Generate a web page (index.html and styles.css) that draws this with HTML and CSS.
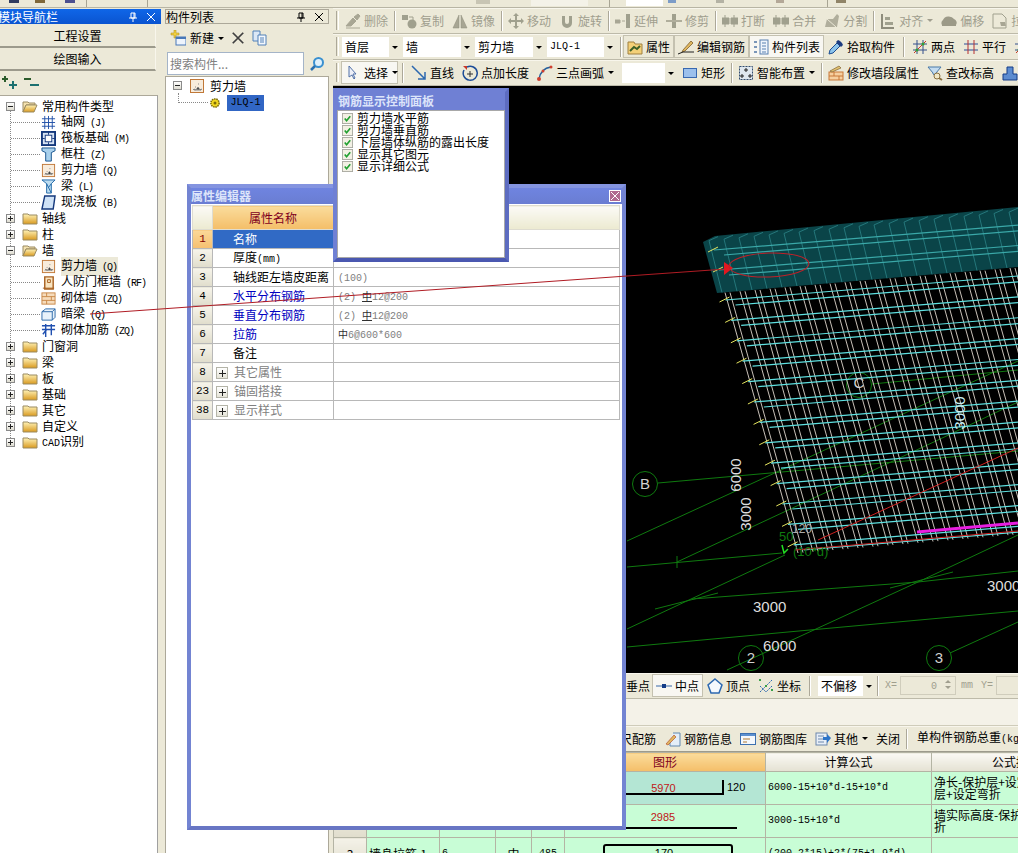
FILE: index.html
```html
<!DOCTYPE html>
<html lang="zh-CN">
    <head>
        <meta charset="UTF-8" />
        <title>钢筋算量 - 绘图输入</title>
        <link rel="stylesheet" href="styles.css">
    </head>
    <body>
        <!-- shared icon sheet -->
        <svg class="defs" width="0" height="0">
            <defs>
                <linearGradient id="fold" x1="0" y1="0" x2="0" y2="1"><stop offset="0" stop-color="#fff3b8"/><stop offset="1" stop-color="#d99a20"/></linearGradient>
                <symbol id="i-folder" viewBox="0 0 16 16"><path d="M1 4h5l1 1h8v9H1z" fill="url(#fold)" stroke="#9a8a60"/></symbol>
                <symbol id="i-open" viewBox="0 0 16 16"><path d="M1 4h5l1 1h6v2H4L1 14z" fill="#f4e2b0" stroke="#9a8a60"/><path d="M4 7h11l-3 7H1z" fill="url(#fold)" stroke="#9a8a60"/></symbol>
                <symbol id="i-axis" viewBox="0 0 16 16"><path d="M1 4h14M1 8h14M1 12h14M4 1v14M8 1v14M12 1v14" stroke="#2050a8" fill="none"/></symbol>
                <symbol id="i-raft" viewBox="0 0 16 16"><rect x="1" y="1" width="14" height="14" fill="#d8e4f4" stroke="#14387c" stroke-width="2"/><rect x="4.500" y="4.500" width="7" height="7" fill="#fff" stroke="#14387c"/><path d="M1 8h3M12 8h3M8 1v3M8 12v3" stroke="#14387c"/></symbol>
                <symbol id="i-col" viewBox="0 0 16 16"><path d="M1 1h14v3l-4 2v9H5V6L1 4z" fill="#a8d0ec" stroke="#14508c"/></symbol>
                <symbol id="i-wall" viewBox="0 0 16 16"><rect x="1.500" y="1.500" width="13" height="13" fill="#f8ecdc" stroke="#c07838"/><path d="M4 12l1-1 2 1 2-3 2 3 2-1M6 9h1M9 6h1M5 12h7" stroke="#8a8a8a"/></symbol>
                <symbol id="i-beam" viewBox="0 0 16 16"><path d="M1 1h14L11 5v10H6V5z" fill="#bcdcf0" stroke="#2068a8"/><path d="M6 5l5 10M11 5l-3 4" stroke="#2068a8"/></symbol>
                <symbol id="i-slab" viewBox="0 0 16 16"><path d="M4 1h11l-2 14H1z" fill="#cfe2f6" stroke="#14387c" stroke-width="1.500"/></symbol>
                <symbol id="i-door" viewBox="0 0 16 16"><path d="M4 2h9v13H4z" fill="#f8e4c0" stroke="#a86020" stroke-width="1.500"/><path d="M7 5h3v3H7zM2 14h12" stroke="#a86020" fill="none"/></symbol>
                <symbol id="i-brick" viewBox="0 0 16 16"><rect x="1" y="2" width="14" height="12" fill="#f6dcbc" stroke="#c88848"/><path d="M1 6h14M1 10h14M6 2v4M11 6v4M6 10v4" stroke="#c88848"/></symbol>
                <symbol id="i-dark" viewBox="0 0 16 16"><path d="M1 5l4-3h10v9l-3 3H1z" fill="#e8f2fa" stroke="#2a68a8"/><path d="M1 5h11v9M12 5l3-3" stroke="#2a68a8" fill="none"/></symbol>
                <symbol id="i-addbar" viewBox="0 0 16 16"><path d="M1 3h14M1 7h14M5 1v14M11 1v12M2 12l4-5" stroke="#2050b0" fill="none" stroke-width="1.500"/></symbol>
                <symbol id="i-gear" viewBox="0 0 16 16"><circle cx="8" cy="8" r="5.500" fill="#f2d820" stroke="#7a6a08" stroke-dasharray="2 1" stroke-width="2"/><circle cx="8" cy="8" r="2" fill="#7a6a08"/></symbol>
                <symbol id="i-new" viewBox="0 0 16 16"><path d="M1 3h3V0h2v3h3v2H6v3H4V5H1z" fill="#f0d040" stroke="#a88818" stroke-width=".5"/><rect x="6" y="7" width="10" height="8" fill="#eef4fc" stroke="#4878b8"/><rect x="6" y="7" width="10" height="2" fill="#4878b8"/></symbol>
                <symbol id="i-x" viewBox="0 0 16 16"><path d="M2 2l12 12M14 2L2 14" stroke="#404040" stroke-width="2"/></symbol>
                <symbol id="i-dup" viewBox="0 0 16 16"><path d="M1 1h7v10H1z" fill="#dce8f6" stroke="#5080b8"/><path d="M6 5h8v10H6z" fill="#f4f8fd" stroke="#5080b8"/><path d="M8 8h4M8 10h4M8 12h4" stroke="#5080b8"/></symbol>
                <symbol id="i-find" viewBox="0 0 16 16"><circle cx="9.500" cy="6.500" r="4.500" fill="#dff0fb" stroke="#3a90d0" stroke-width="2"/><path d="M6 10l-4 4" stroke="#2a70b0" stroke-width="2.500"/></symbol>
                <symbol id="i-check" viewBox="0 0 12 12"><rect x=".5" y=".5" width="11" height="11" fill="#f2f0e4" stroke="#a8a8a0"/><path d="M3 6l2 2.500L9 3.500" fill="none" stroke="#20a030" stroke-width="1.800"/></symbol>
                <symbol id="i-pin" viewBox="0 0 10 10"><path d="M3 1h4v5H3zM1 6h8M5 6v4M6 1v5" stroke="currentColor" fill="none"/></symbol>
                <symbol id="i-close" viewBox="0 0 10 10"><path d="M1 1l8 8M9 1L1 9" stroke="currentColor"/></symbol>
                <symbol id="i-plus2" viewBox="0 0 16 16"><path d="M3 1v6M0 4h6" stroke="#2c5c2c" stroke-width="2"/><path d="M11 6v8M7 10h8" stroke="#1c7070" stroke-width="2"/></symbol>
                <symbol id="i-minus2" viewBox="0 0 16 16"><path d="M0 4h7" stroke="#2c5c2c" stroke-width="2"/><path d="M6 10h9" stroke="#1c7070" stroke-width="2"/></symbol>

                <symbol id="g-erase" viewBox="0 0 16 16"><path d="M1 13l7-8 3 3-5 5zM9 4l4-3 2 2-3 4zM1 15h14" fill="#a8a694" stroke="#a8a694"/></symbol>
                <symbol id="g-copy" viewBox="0 0 16 16"><rect x="1" y="2" width="6" height="5" fill="#a0a08e"/><circle cx="11" cy="11" r="4.500" fill="#a0a08e"/><path d="M8 4h4v3" stroke="#a0a08e" fill="none"/></symbol>
                <symbol id="g-mirror" viewBox="0 0 16 16"><path d="M7 2v13H1zM9 2v13h6z" fill="#a8a694" stroke="#8e8c7c" stroke-width=".5"/></symbol>
                <symbol id="g-move" viewBox="0 0 16 16"><path d="M8 0l3 3H9v4h4V5l3 3-3 3V9H9v4h2l-3 3-3-3h2V9H3v2L0 8l3-3v2h4V3H5z" fill="#a0a08e"/></symbol>
                <symbol id="g-rot" viewBox="0 0 16 16"><path d="M3 3v7a5 5 0 0 0 10 0V3h-3v6a2 2 0 0 1-4 0V3z" fill="#a0a08e"/></symbol>
                <symbol id="g-ext" viewBox="0 0 16 16"><path d="M0 7h5v3H0zM7 8h3" stroke="#a8a694" fill="#a8a694"/><rect x="11" y="1" width="4" height="14" fill="#a0a08e"/></symbol>
                <symbol id="g-trim" viewBox="0 0 16 16"><rect x="6" y="1" width="4" height="14" fill="#a0a08e"/><path d="M0 7h16v2H0z" fill="#b0ae9c"/></symbol>
                <symbol id="g-break" viewBox="0 0 16 16"><path d="M0 5h7v6H0zM9 5h7v6H9zM3 2v3M12 2v3M3 11v3M12 11v3" fill="#a0a08e" stroke="#a0a08e"/></symbol>
                <symbol id="g-split" viewBox="0 0 16 16"><path d="M1 14l2-8h6l4-5 2 2-2 11z" fill="#b0ae9c"/><path d="M3 6l9 8" stroke="#ece9d8"/></symbol>
                <symbol id="g-align" viewBox="0 0 16 16"><path d="M2 1v14h12" fill="none" stroke="#8e8c7c" stroke-width="2"/><path d="M5 4h5v3H5zM5 9h8v3H5z" fill="#a0a08e"/></symbol>
                <symbol id="g-off" viewBox="0 0 16 16"><path d="M1 12a4 4 0 0 1 1-5 6 5 0 0 1 11-1 4 4 0 0 1 2 6v1H1z" fill="#9c9a88"/></symbol>
                <symbol id="g-str" viewBox="0 0 16 16"><path d="M1 1h9l4 4v10H1z" fill="none" stroke="#a0a08e"/><path d="M8 9h5l1 4H9z" fill="#a8a694"/></symbol>

                <symbol id="c-prop" viewBox="0 0 16 16"><path d="M1 3h6l1 2h7v10H1z" fill="#f4d078" stroke="#a08040"/><path d="M3 12l4-4 3 2 3-3" stroke="#3c6028" stroke-width="2" fill="none"/></symbol>
                <symbol id="c-edit" viewBox="0 0 16 16"><path d="M5 11L13 2l2 2-8 8-3 1z" fill="#e0b860" stroke="#705020" stroke-width=".7"/><path d="M0 15l5-2 11 0" stroke="#202020" fill="none"/></symbol>
                <symbol id="c-list" viewBox="0 0 16 16"><path d="M1 2h3v2H1zM1 7h3v2H1zM1 12h3v2H1z" fill="#7a96b8"/><rect x="7" y="1" width="8" height="14" fill="#eef4fc" stroke="#5880b0"/><path d="M9 4h4M9 7h4M9 10h4M9 13h4" stroke="#5880b0"/></symbol>
                <symbol id="c-pick" viewBox="0 0 16 16"><path d="M1 15l1-4 7-7 3 3-7 7z" fill="#8cc4ec" stroke="#1c4c90"/><path d="M8 3l2-2 2 1 2 2 1 2-2 2z" fill="#1c3c80"/></symbol>
                <symbol id="c-two" viewBox="0 0 16 16"><path d="M1 5h14M1 11h14M5 1v14M11 1v14" stroke="#34508c"/><path d="M2 14L14 2" stroke="#c83828"/><circle cx="5" cy="11" r="1.500" fill="#30a030"/><circle cx="11" cy="5" r="1.500" fill="#30a030"/></symbol>
                <symbol id="c-par" viewBox="0 0 16 16"><path d="M1 5h14M1 11h14" stroke="#2c4c98"/><path d="M5 1v14M11 1v14" stroke="#b83030"/></symbol>
                <symbol id="c-arrow" viewBox="0 0 16 16"><path d="M4 1v11l3-2 2 4 1-1-2-4h3z" fill="#eef0f8" stroke="#5070a8"/></symbol>
                <symbol id="c-line" viewBox="0 0 16 16"><path d="M1 1l13 13M14 7v7H7" stroke="#2c68b0" stroke-width="1.500" fill="none"/></symbol>
                <symbol id="c-plen" viewBox="0 0 16 16"><path d="M5 2a7 7 0 1 1-3 3" stroke="#1c4c98" stroke-width="1.500" fill="none"/><path d="M8 6v6M5 9h6" stroke="#303030"/><path d="M1 1h4v4z" fill="#c83828"/></symbol>
                <symbol id="c-arc" viewBox="0 0 16 16"><path d="M2 14C3 8 7 3 14 2" stroke="#24609c" stroke-width="1.500" fill="none"/><circle cx="2" cy="14" r="2" fill="#d04030"/><circle cx="6" cy="6" r="1.500" fill="#d04030"/><circle cx="14" cy="2" r="1.500" fill="#d04030"/></symbol>
                <symbol id="c-rect" viewBox="0 0 16 16"><rect x="1.500" y="3.500" width="13" height="9" fill="#9cc0ec" stroke="#3868b0"/></symbol>
                <symbol id="c-smart" viewBox="0 0 16 16"><rect x="1.500" y="1.500" width="13" height="13" fill="#dfe8f0" stroke="#304c70" stroke-dasharray="2 1"/><path d="M8 3v4M6 5h4M4 9v4M2 11h4M12 9v4M10 11h4" stroke="#202020"/></symbol>
                <symbol id="c-editw" viewBox="0 0 16 16"><rect x="1" y="7" width="14" height="8" fill="#f6d0a0" stroke="#c87838"/><path d="M1 11h14M6 7v4M11 11v4" stroke="#c87838"/><path d="M2 6l9-5 2 2-9 4z" fill="#e0c070" stroke="#705020" stroke-width=".6"/></symbol>
                <symbol id="c-elev" viewBox="0 0 16 16"><path d="M1 2h13L9 8v3L6 9V8z" fill="#c4dcf0" stroke="#4878a8"/><circle cx="10" cy="11" r="3" fill="#f0e8c8" stroke="#8a7040"/><path d="M12 13l3 2" stroke="#8a7040" stroke-width="2"/></symbol>
                <symbol id="c-next" viewBox="0 0 16 16"><path d="M1 15V9h4V2h6v7h4v6z" fill="#5c8cd0" stroke="#143c88"/></symbol>
                <symbol id="c-mid" viewBox="0 0 16 16"><path d="M0 8h16" stroke="#3868a8"/><rect x="6" y="6" width="4" height="4" fill="#143c88"/></symbol>
                <symbol id="c-vertex" viewBox="0 0 16 16"><path d="M8 1l7 6-3 8H4L1 7z" fill="#f4f8fc" stroke="#2c68b0" stroke-width="1.500"/></symbol>
                <symbol id="c-coord" viewBox="0 0 16 16"><path d="M2 14L14 2M2 8l6 6 6-6" stroke="#2c68b0" stroke-dasharray="2 1" fill="none"/><path d="M1 1h2v2H1zM13 11h2v2h-2zM7 7h2v2H7z" fill="#38a048"/></symbol>
                <symbol id="c-info" viewBox="0 0 16 16"><path d="M8 2h7v13H5V9" fill="#e4eef8" stroke="#6088b0"/><path d="M1 13l8-9 2 2-8 8z" fill="#e0b860" stroke="#b04020" stroke-width=".6"/></symbol>
                <symbol id="c-lib" viewBox="0 0 16 16"><rect x=".5" y="2.500" width="15" height="11" fill="#f4f8fc" stroke="#3c70b0"/><rect x="1" y="3" width="14" height="2" fill="#5c90d0"/><path d="M3 8h7M3 11h4" stroke="#b07830"/></symbol>
                <symbol id="c-other" viewBox="0 0 16 16"><rect x="1" y="2" width="11" height="12" fill="#e8eff8" stroke="#6c88ac"/><path d="M3 5h6M3 8h6M3 11h6" stroke="#6c88ac"/><path d="M8 6h4V3l4 4-4 5V9H8z" fill="#2c74c8"/></symbol>
            </defs>
        </svg>

        <div class="top-strip">
            <i class="stub s-a"></i><i class="stub s-b"></i><i class="stub s-c"></i>
            <span class="vbar v-a"></span>
            <span class="vbar v-b"></span>
            <i class="stub s-d"></i>
            <span class="stub-combo c-a"></span>
            <span class="vbar v-c"></span>
            <span class="stub-combo c-b"></span>
            <i class="stub s-e"></i><i class="stub s-f"></i><i class="stub s-g"></i>
            <span class="vbar v-d"></span>
            <i class="stub s-h"></i>
        </div>

        <div class="app">
            <!-- module navigator -->
            <aside class="nav">
                <div class="pane-head active">
                    <span class="nav-title">模块导航栏</span>
                    <svg class="pane-ic"><use href="#i-pin"/></svg>
                    <svg class="pane-ic"><use href="#i-close"/></svg>
                </div>
                <div class="nav-btn">工程设置</div>
                <div class="nav-btn">绘图输入</div>
                <div class="nav-tools">
                    <svg class="ic"><use href="#i-plus2"/></svg>
                    <svg class="ic"><use href="#i-minus2"/></svg>
                </div>
                <ul class="tree">
                    <li>
                        <div class="node"><b class="box minus"></b><svg class="ic"><use href="#i-open"/></svg><span>常用构件类型</span></div>
                        <ul class="kids">
                            <li class="kid"><svg class="ic"><use href="#i-axis"/></svg><span>轴网<em> (J)</em></span></li>
                            <li class="kid"><svg class="ic"><use href="#i-raft"/></svg><span>筏板基础<em> (M)</em></span></li>
                            <li class="kid"><svg class="ic"><use href="#i-col"/></svg><span>框柱<em> (Z)</em></span></li>
                            <li class="kid"><svg class="ic"><use href="#i-wall"/></svg><span>剪力墙<em> (Q)</em></span></li>
                            <li class="kid"><svg class="ic"><use href="#i-beam"/></svg><span>梁<em> (L)</em></span></li>
                            <li class="kid"><svg class="ic"><use href="#i-slab"/></svg><span>现浇板<em> (B)</em></span></li>
                        </ul>
                    </li>
                    <li><div class="node"><b class="box"></b><svg class="ic"><use href="#i-folder"/></svg><span>轴线</span></div></li>
                    <li><div class="node"><b class="box"></b><svg class="ic"><use href="#i-folder"/></svg><span>柱</span></div></li>
                    <li>
                        <div class="node"><b class="box minus"></b><svg class="ic"><use href="#i-open"/></svg><span>墙</span></div>
                        <ul class="kids">
                            <li class="kid"><svg class="ic"><use href="#i-wall"/></svg><span class="current">剪力墙<em> (Q)</em></span></li>
                            <li class="kid"><svg class="ic"><use href="#i-door"/></svg><span>人防门框墙<em> (RF)</em></span></li>
                            <li class="kid"><svg class="ic"><use href="#i-brick"/></svg><span>砌体墙<em> (ZQ)</em></span></li>
                            <li class="kid"><svg class="ic"><use href="#i-dark"/></svg><span>暗梁<em> (Q)</em></span></li>
                            <li class="kid"><svg class="ic"><use href="#i-addbar"/></svg><span>砌体加筋<em> (ZQ)</em></span></li>
                        </ul>
                    </li>
                    <li><div class="node"><b class="box"></b><svg class="ic"><use href="#i-folder"/></svg><span>门窗洞</span></div></li>
                    <li><div class="node"><b class="box"></b><svg class="ic"><use href="#i-folder"/></svg><span>梁</span></div></li>
                    <li><div class="node"><b class="box"></b><svg class="ic"><use href="#i-folder"/></svg><span>板</span></div></li>
                    <li><div class="node"><b class="box"></b><svg class="ic"><use href="#i-folder"/></svg><span>基础</span></div></li>
                    <li><div class="node"><b class="box"></b><svg class="ic"><use href="#i-folder"/></svg><span>其它</span></div></li>
                    <li><div class="node"><b class="box"></b><svg class="ic"><use href="#i-folder"/></svg><span>自定义</span></div></li>
                    <li><div class="node"><b class="box"></b><svg class="ic"><use href="#i-folder"/></svg><span><em>CAD</em>识别</span></div></li>
                </ul>
            </aside>

            <!-- component list -->
            <aside class="list">
                <div class="pane-head">
                    <span class="list-title">构件列表</span>
                    <svg class="pane-ic"><use href="#i-pin"/></svg>
                    <svg class="pane-ic"><use href="#i-close"/></svg>
                </div>
                <div class="list-tools">
                    <svg class="ic"><use href="#i-new"/></svg>
                    <span>新建</span><i class="caret"></i>
                    <svg class="ic list-x"><use href="#i-x"/></svg>
                    <svg class="ic"><use href="#i-dup"/></svg>
                </div>
                <div class="list-search">
                    <span class="search-box">搜索构件...</span>
                    <svg class="ic"><use href="#i-find"/></svg>
                </div>
                <div class="list-tree">
                    <div class="list-root"><b class="box minus"></b><svg class="ic"><use href="#i-wall"/></svg><span>剪力墙</span></div>
                    <div class="list-item"><svg class="ic small"><use href="#i-gear"/></svg><span class="picked">JLQ-1</span></div>
                </div>
            </aside>

            <main class="work">
                <div class="tb">
                    <span class="grip"></span>
                    <span class="tool off"><svg class="ic"><use href="#g-erase"/></svg>删除</span><span class="sep"></span>
                    <span class="tool off"><svg class="ic"><use href="#g-copy"/></svg>复制</span>
                    <span class="tool off"><svg class="ic"><use href="#g-mirror"/></svg>镜像</span><span class="sep"></span>
                    <span class="tool off"><svg class="ic"><use href="#g-move"/></svg>移动</span>
                    <span class="tool off"><svg class="ic"><use href="#g-rot"/></svg>旋转</span><span class="sep"></span>
                    <span class="tool off"><svg class="ic"><use href="#g-ext"/></svg>延伸</span>
                    <span class="tool off"><svg class="ic"><use href="#g-trim"/></svg>修剪</span><span class="sep"></span>
                    <span class="tool off"><svg class="ic"><use href="#g-break"/></svg>打断</span>
                    <span class="tool off"><svg class="ic"><use href="#g-break"/></svg>合并</span>
                    <span class="tool off"><svg class="ic"><use href="#g-split"/></svg>分割</span><span class="sep"></span>
                    <span class="tool off"><svg class="ic"><use href="#g-align"/></svg>对齐<i class="caret"></i></span>
                    <span class="tool off"><svg class="ic"><use href="#g-off"/></svg>偏移</span>
                    <span class="tool off"><svg class="ic"><use href="#g-str"/></svg>拉伸</span>
                </div>
                <div class="tb">
                    <span class="grip"></span>
                    <span class="combo w-floor">首层<i class="drop"></i></span>
                    <span class="combo w-type">墙<i class="drop"></i></span>
                    <span class="combo w-type">剪力墙<i class="drop"></i></span>
                    <span class="combo w-name">JLQ-1<i class="drop"></i></span>
                    <span class="sep"></span>
                    <span class="tool down"><svg class="ic"><use href="#c-prop"/></svg>属性</span>
                    <span class="tool down"><svg class="ic"><use href="#c-edit"/></svg>编辑钢筋</span>
                    <span class="tool down light"><svg class="ic"><use href="#c-list"/></svg>构件列表</span>
                    <span class="tool"><svg class="ic"><use href="#c-pick"/></svg>拾取构件</span>
                    <span class="sep wide"></span>
                    <span class="tool"><svg class="ic"><use href="#c-two"/></svg>两点</span>
                    <span class="tool"><svg class="ic"><use href="#c-par"/></svg>平行</span>
                    <span class="tool"><svg class="ic"><use href="#c-two"/></svg>点角</span>
                </div>
                <div class="tb">
                    <span class="grip"></span>
                    <span class="tool down light pick"><svg class="ic"><use href="#c-arrow"/></svg>选择<i class="caret"></i></span>
                    <span class="sep wide"></span>
                    <span class="tool"><svg class="ic"><use href="#c-line"/></svg>直线</span>
                    <span class="tool"><svg class="ic"><use href="#c-plen"/></svg>点加长度</span>
                    <span class="tool"><svg class="ic"><use href="#c-arc"/></svg>三点画弧<i class="caret"></i></span>
                    <span class="combo w-arc"><i class="drop"></i></span>
                    <span class="tool"><svg class="ic"><use href="#c-rect"/></svg>矩形</span><span class="sep"></span>
                    <span class="tool"><svg class="ic"><use href="#c-smart"/></svg>智能布置<i class="caret"></i></span><span class="sep"></span>
                    <span class="tool"><svg class="ic"><use href="#c-editw"/></svg>修改墙段属性</span>
                    <span class="tool"><svg class="ic"><use href="#c-elev"/></svg>查改标高</span>
                    <span class="tool"><svg class="ic"><use href="#c-next"/></svg></span>
                </div>

                <div class="canvas">
                    <svg class="drawing" viewBox="333 86 685 587" width="685" height="587">
                        <g class="axis">
                            <circle cx="645" cy="484" r="12.500"/><circle cx="859" cy="385" r="12.500"/>
                            <circle cx="751" cy="658" r="12.500"/><circle cx="939" cy="658" r="12.500"/>
                            <path d="M658 483L1018 451M872 384L1018 370M627 541L1018 361M677 562L938 440L1018 402M627 567L782 553M627 629L785 555M692 599L918 582L1018 571M655 609L718 593M890 588L953 572M727 670L918 582L1018 535M627 647L788 632L1018 611M950 653L1018 622M677 556V568"/>
                        </g>
                        <g id="rebar"></g>
                        <path class="edge" d="M795 550L1018 531M818 540L1018 448"/>
                        <path class="magenta" d="M917 532L1018 523"/>
                        <path class="tick" d="M782 545L784 553L788 549"/>
                        <text class="dim up" transform="translate(741 475) rotate(-90)">6000</text>
                        <text class="dim up" transform="translate(751 514) rotate(-90)">3000</text>
                        <text class="dim up cyan" transform="translate(965 413) rotate(-90)">3000</text>
                        <text class="dim" x="753" y="612">3000</text>
                        <text class="dim" x="763" y="651">6000</text>
                        <text class="dim" x="987" y="591">3000</text>
                        <text class="dim small" x="792" y="533">120</text>
                        <text class="dim green" x="779" y="541">50</text>
                        <text class="dim green" x="793" y="556">(10*d)</text>
                        <text class="mark" x="645" y="489">B</text>
                        <text class="mark" x="859" y="388">C</text>
                        <text class="mark" x="751" y="663">2</text>
                        <text class="mark" x="939" y="663">3</text>
                    </svg>
                </div>

                <div class="tb">
                    <span class="tool snap-first">垂点</span>
                    <span class="tool down light"><svg class="ic"><use href="#c-mid"/></svg>中点</span>
                    <span class="tool"><svg class="ic"><use href="#c-vertex"/></svg>顶点</span>
                    <span class="tool"><svg class="ic"><use href="#c-coord"/></svg>坐标</span>
                    <span class="sep wide"></span>
                    <span class="combo w-off">不偏移<i class="drop"></i></span>
                    <span class="sep"></span>
                    <span class="coord-label">X=</span>
                    <span class="coord-box">0<i class="spin"></i></span>
                    <span class="coord-label">mm</span>
                    <span class="coord-label y">Y=</span>
                    <span class="coord-box"></span>
                </div>
                <div class="gap-bar"></div>
                <div class="tb rebar-tools">
                    <span class="tool snap-first">尺配筋</span>
                    <span class="tool"><svg class="ic"><use href="#c-info"/></svg>钢筋信息</span>
                    <span class="tool"><svg class="ic"><use href="#c-lib"/></svg>钢筋图库</span>
                    <span class="tool"><svg class="ic"><use href="#c-other"/></svg>其他<i class="caret"></i></span>
                    <span class="tool">关闭</span>
                    <span class="sep"></span>
                    <span class="total">单构件钢筋总重<em>(kg)</em>：</span>
                </div>
                <table class="rebar">
                    <colgroup>
                        <col class="c-no"><col class="c-name"><col class="c-dia"><col class="c-grade"><col class="c-code"><col class="c-shape"><col class="c-calc"><col class="c-desc">
                    </colgroup>
                    <tr class="head">
                        <th></th><th>筋号</th><th>直径(mm)</th><th>级别</th><th>图号</th><th class="hot">图形</th><th>计算公式</th><th>公式描述</th>
                    </tr>
                    <tr class="sel">
                        <td class="no">1</td><td class="left">墙身水平钢筋.1</td><td class="left mono">12</td><td>中</td><td class="mono">64</td>
                        <td class="shape"><div class="bar hook"><span class="red">5970</span></div><span class="end">120</span></td>
                        <td class="left mono">6000-15+10*d-15+10*d</td>
                        <td class="left desc">净长-保护层+设定弯折-保护<br>层+设定弯折</td>
                    </tr>
                    <tr>
                        <td class="no">2</td><td class="left">墙身垂直钢筋.1</td><td class="left mono">12</td><td>中</td><td class="mono">18</td>
                        <td class="shape"><div class="bar"><span class="red">2985</span></div></td>
                        <td class="left mono">3000-15+10*d</td>
                        <td class="left desc">墙实际高度-保护层+设定弯<br>折</td>
                    </tr>
                    <tr>
                        <td class="no">3</td><td class="left">墙身拉筋.1</td><td class="left mono">6</td><td>中</td><td class="mono">485</td>
                        <td class="shape"><div class="stirrup">170</div></td>
                        <td class="left mono">(200-2*15)+2*(75+1.9*d)</td>
                        <td class="left desc"></td>
                    </tr>
                </table>
            </main>
        </div>

        <!-- floating property editor -->
        <section class="prop-win">
            <header class="win-title">
                <span>属性编辑器</span>
                <button class="win-close"><svg><use href="#i-close"/></svg></button>
            </header>
            <div class="win-body">
                <table class="props">
                    <colgroup><col class="p-no"><col class="p-name"><col class="p-val"></colgroup>
                    <tr class="p-head"><th></th><th class="hot">属性名称</th><th>属性值</th></tr>
                    <tr class="on"><td class="no">1</td><td class="name">名称</td><td class="val">JLQ-1</td></tr>
                    <tr><td class="no">2</td><td class="name">厚度<em>(mm)</em></td><td class="val"><em>200</em></td></tr>
                    <tr><td class="no">3</td><td class="name">轴线距左墙皮距离</td><td class="val"><em>(100)</em></td></tr>
                    <tr class="link"><td class="no">4</td><td class="name">水平分布钢筋</td><td class="val"><em>(2) </em><i class="bar-mark hrb">中</i><em>12@200</em></td></tr>
                    <tr class="link"><td class="no">5</td><td class="name">垂直分布钢筋</td><td class="val"><em>(2) </em><i class="bar-mark hrb">中</i><em>12@200</em></td></tr>
                    <tr class="link"><td class="no">6</td><td class="name">拉筋</td><td class="val"><i class="bar-mark">中</i><em>6@600*600</em></td></tr>
                    <tr><td class="no">7</td><td class="name">备注</td><td class="val"></td></tr>
                    <tr class="group"><td class="no">8</td><td class="name"><b class="plus"></b>其它属性</td><td class="val"></td></tr>
                    <tr class="group"><td class="no">23</td><td class="name"><b class="plus"></b>锚固搭接</td><td class="val"></td></tr>
                    <tr class="group"><td class="no">38</td><td class="name"><b class="plus"></b>显示样式</td><td class="val"></td></tr>
                </table>
            </div>
        </section>

        <!-- floating rebar display panel -->
        <section class="rebar-panel">
            <header class="panel-title">钢筋显示控制面板</header>
            <ul class="panel-body">
                <li><svg class="chk"><use href="#i-check"/></svg>剪力墙水平筋</li>
                <li><svg class="chk"><use href="#i-check"/></svg>剪力墙垂直筋</li>
                <li><svg class="chk"><use href="#i-check"/></svg>下层墙体纵筋的露出长度</li>
                <li><svg class="chk"><use href="#i-check"/></svg>显示其它图元</li>
                <li><svg class="chk"><use href="#i-check"/></svg>显示详细公式</li>
            </ul>
        </section>

        <!-- hand-drawn annotation across the whole shot -->
        <svg class="note" viewBox="0 0 1018 853" width="1018" height="853">
            <path class="note-line" d="M90 314L726 269"/>
            <path class="note-head" d="M724 262L733 268L724 275z"/>
            <ellipse class="note-ring" cx="769" cy="265" rx="40" ry="12" transform="rotate(-2 769 265)"/>
        </svg>

        <script src="canvas.js"></script>
    </body>
</html>
```

FILE: styles.css
```css
body {
    margin: 0;
    width: 1018px;
    height: 853px;
    overflow: hidden;
    position: relative;
    background-color: #ece9d8;
    font-family: "Noto Sans CJK SC", "Liberation Sans", sans-serif;
    font-size: 12px;
    line-height: 14px;
    color: #000;
}

ul {
    list-style: none;
    margin: 0;
    padding: 0;
}

em {
    font-family: "Liberation Mono", monospace;
    font-style: normal;
    font-size: 10px;
}

.defs {
    position: absolute;
}

.ic {
    width: 16px;
    height: 16px;
    flex: none;
}

.ic.small {
    width: 12px;
    height: 12px;
}

.caret {
    display: inline-block;
    width: 0;
    height: 0;
    margin-left: 1px;
    border: 3px solid transparent;
    border-top: 3px solid #000;
    border-bottom: 0;
}

/* clipped toolbar along the top edge */
.top-strip {
    height: 7px;
    border-bottom: 1px solid #b8b5a4;
    display: flex;
    overflow: hidden;
}

.stub {
    display: block;
    height: 3px;
    width: 10px;
    flex: none;
}

.s-a { margin-left: 9px; background-color: #303c60; }
.s-b { margin-left: 16px; background-color: #806838; }
.s-c { margin-left: 20px; background-color: #4c5090; }
.s-d { margin-left: 328px; width: 14px; height: 4px; background-color: #c8c5b4; }
.s-e { margin-left: 5px; width: 8px; background-color: #7c9cc8; }
.s-f { margin-left: 40px; width: 8px; background-color: #b4b2a4; }
.s-g { margin-left: 52px; width: 8px; background-color: #b4a898; }
.s-h { margin-left: 8px; background-color: #908468; }

.vbar {
    width: 1px;
    background-color: #a8a594;
    flex: none;
}

.v-a { margin-left: 11px; }
.v-b { margin-left: 60px; }
.v-c { margin-left: 21px; }
.v-d { margin-left: 43px; }

.stub-combo {
    height: 6px;
    background-color: #fff;
    flex: none;
}

.c-a { margin-left: 41px; width: 57px; background-color: #f4f2e8; }
.c-b { margin-left: 16px; width: 37px; }

.app {
    display: flex;
    height: 845px;
}

/* panes */
.pane-head {
    height: 15px;
    margin-top: 1px;
    display: flex;
    align-items: center;
    gap: 8px;
    padding-right: 4px;
    background-color: #ece9d8;
    border: 1px solid #aca899;
    box-sizing: border-box;
    overflow: hidden;
}

.pane-head.active {
    width: 161px;
    border: 0;
    padding-right: 5px;
    color: #fff;
    background: linear-gradient(#0f66e8, #0a54d0);
}

.pane-ic {
    width: 10px;
    height: 10px;
    flex: none;
}

.nav-title {
    margin-left: -2px;
    margin-right: auto;
}

.list-title {
    margin-right: auto;
}

.nav {
    width: 165px;
    flex: none;
    display: flex;
    flex-direction: column;
}

.nav-btn {
    height: 21px;
    line-height: 21px;
    width: 155px;
    text-align: center;
    border-right: 1px solid #f8f6ec;
    border-bottom: 2px solid #9c9a8c;
    margin-top: 1px;
    margin-bottom: -1px;
}

.nav-btn:first-of-type {
    margin-top: 2px;
}

.nav-tools {
    height: 25px;
    display: flex;
    align-items: center;
    gap: 6px;
    padding-left: 2px;
    width: 156px;
}

.tree {
    flex: 1;
    position: relative;
    width: 157px;
    background-color: #fff;
    border-top: 1px solid #aca899;
    border-right: 1px solid #a0a0a0;
    padding-top: 2px;
}

.tree::before {
    content: "";
    position: absolute;
    left: 10px;
    top: 10px;
    height: 336px;
    border-left: 1px dotted #888;
}

.node,
.kid {
    height: 16px;
    display: flex;
    align-items: center;
    position: relative;
    white-space: nowrap;
}

.node .ic {
    margin: 0 4px 0 7px;
}

.box {
    display: block;
    box-sizing: border-box;
    width: 9px;
    height: 9px;
    margin-left: 6px;
    flex: none;
    position: relative;
    border: 1px solid #8a8a8a;
    background:
        linear-gradient(#222, #222) center / 5px 1px no-repeat,
        linear-gradient(#222, #222) center / 1px 5px no-repeat,
        linear-gradient(#fff, #dedcd0);
}

.box.minus {
    background:
        linear-gradient(#222, #222) center / 5px 1px no-repeat,
        linear-gradient(#fff, #dedcd0);
}

.kid {
    padding-left: 41px;
}

.kid em {
    letter-spacing: -1px;
}

.kid .ic {
    width: 15px;
    height: 15px;
    margin-right: 5px;
    position: relative;
}

.kid::before {
    content: "";
    position: absolute;
    left: 11px;
    width: 29px;
    top: 8px;
    border-top: 1px dotted #888;
}

.current {
    background-color: #ece9d8;
    padding: 1px 1px 1px 0;
}

/* component list */
.list {
    width: 168px;
    flex: none;
    display: flex;
    flex-direction: column;
}

.list .pane-head {
    width: 164px;
}

.list-tools {
    height: 26px;
    width: 164px;
    display: flex;
    align-items: center;
    padding-left: 5px;
    box-sizing: border-box;
    margin-top: 1px;
    gap: 4px;
}

.list-x {
    width: 14px;
    height: 14px;
    margin-left: 3px;
    margin-right: 3px;
}

.list-tools .caret {
    margin-left: 0;
}

.list-search {
    height: 25px;
    width: 164px;
    display: flex;
    align-items: center;
    gap: 5px;
    padding-left: 2px;
    box-sizing: border-box;
}

.search-box {
    width: 137px;
    height: 23px;
    line-height: 21px;
    box-sizing: border-box;
    padding-left: 2px;
    background-color: #fff;
    border: 1px solid #a4b4c8;
    color: #808080;
}

.list-tree {
    flex: 1;
    width: 162px;
    background-color: #fff;
    border: 1px solid #aca899;
    border-bottom: 0;
    position: relative;
}

.list-root {
    height: 17px;
    display: flex;
    align-items: center;
    padding-left: 7px;
}

.list-root .box {
    margin: 0 7px 0 0;
}

.list-root .ic {
    margin-right: 5px;
}

.list-item {
    height: 17px;
    display: flex;
    align-items: center;
    padding-left: 43px;
    position: relative;
}

.list-item::before {
    content: "";
    position: absolute;
    left: 12px;
    top: -1px;
    width: 29px;
    height: 9px;
    border-left: 1px dotted #888;
    border-bottom: 1px dotted #888;
}

.picked {
    margin-left: 6px;
    width: 37px;
    height: 16px;
    line-height: 16px;
    text-align: center;
    background-color: #3166c4;
    font-family: "Liberation Mono", monospace;
    font-size: 10px;
}

/* work area */
.work {
    flex: 1;
    min-width: 0;
    display: flex;
    flex-direction: column;
    overflow: hidden;
}

.tb {
    height: 25px;
    border-bottom: 1px solid #bdbaa9;
    box-shadow: inset 0 1px 0 #f8f6ec;
    display: flex;
    align-items: center;
    flex: none;
    white-space: nowrap;
    overflow: hidden;
}

.grip {
    width: 1px;
    height: 19px;
    margin: 0 2px 0 3px;
    border-left: 1px solid #aca899;
    border-right: 1px solid #fff;
    flex: none;
}

.sep {
    width: 1px;
    height: 20px;
    background-color: #aca899;
    box-shadow: 1px 0 0 #fff;
    margin: 0 2px;
    flex: none;
}

.sep.wide {
    margin: 0 4px 0 4px;
}

.tool {
    display: flex;
    align-items: center;
    gap: 3px;
    padding: 0 4px;
    height: 23px;
    box-sizing: border-box;
    flex: none;
}

.tool.off {
    color: #a09e8e;
}

.tool.off .caret {
    border-top-color: #a09e8e;
}

.tool.down {
    border: 1px solid #c4c1b0;
    padding: 0 3px;
}

.tool.light {
    background-color: #f8f7f2;
}

.pick {
    width: 57px;
}

.combo {
    height: 20px;
    line-height: 20px;
    background-color: #fff;
    padding-left: 3px;
    box-sizing: border-box;
    display: flex;
    margin-right: 3px;
    flex: none;
    overflow: hidden;
}

.w-floor { width: 58px; margin-left: 1px; }
.w-type { width: 69px; }
.w-name { width: 68px; font-family: "Liberation Mono", monospace; font-size: 10px; }
.w-arc { width: 54px; margin: 0 2px 0 4px; }
.w-off { width: 56px; margin: 0 1px 0 4px; }

.drop {
    width: 11px;
    margin-left: auto;
    background: #ece9d8;
    position: relative;
    flex: none;
}

.drop::after {
    content: "";
    position: absolute;
    left: 3px;
    top: 9px;
    border: 3px solid transparent;
    border-top: 3px solid #000;
    border-bottom: 0;
}

/* drawing */
.canvas {
    height: 587px;
    flex: none;
    background-color: #000;
    overflow: hidden;
}

.drawing {
    display: block;
    font-family: "Liberation Sans", sans-serif;
}

.axis circle,
.axis path {
    fill: none;
    stroke: #0f7a0f;
    stroke-width: 1;
}

.edge {
    fill: none;
    stroke: #d02020;
}

.magenta {
    fill: none;
    stroke: #e81ee0;
    stroke-width: 3;
}

.tick {
    fill: none;
    stroke: #22dd22;
    stroke-width: 1.500;
}

.dim {
    fill: #dedede;
    font-size: 15px;
}

.dim.up {
    text-anchor: middle;
}

.dim.cyan {
    fill: #c8eef0;
}

.dim.small {
    font-size: 12px;
    fill: #aaa;
}

.dim.green {
    fill: #0f7a0f;
    font-size: 13px;
}

.mark {
    fill: #d0d0d0;
    font-size: 15px;
    text-anchor: middle;
}

/* strip under the drawing */
.snap-first {
    padding: 0 2px 0 3px;
    margin-left: 290px;
}

.rebar-tools .snap-first {
    padding-right: 5px;
    margin-left: 284px;
}

.coord-label {
    color: #a09e8e;
    font-family: "Liberation Mono", monospace;
    font-size: 10px;
    margin: 0 3px 0 5px;
}

.coord-box {
    width: 56px;
    height: 19px;
    line-height: 19px;
    box-sizing: border-box;
    border: 1px solid #d0cdbc;
    text-align: right;
    padding-right: 18px;
    color: #a09e8e;
    position: relative;
    flex: none;
    font-family: "Liberation Mono", monospace;
    font-size: 10px;
}

.spin {
    position: absolute;
    right: 4px;
    top: 3px;
    width: 0;
    border: 3px solid transparent;
    border-bottom: 3px solid #a09e8e;
    border-top: 0;
}

.spin::after {
    content: "";
    position: absolute;
    left: -3px;
    top: 6px;
    border: 3px solid transparent;
    border-top: 3px solid #a09e8e;
    border-bottom: 0;
}

.gap-bar {
    height: 26px;
    flex: none;
    background-color: #f4f2e8;
    border-bottom: 1px solid #cfccba;
}

.rebar-tools {
    border-bottom: 1px solid #9c9a8c;
}

.total {
    margin-left: 8px;
}

.rebar {
    border-collapse: collapse;
    table-layout: fixed;
    width: 767px;
    flex: none;
    background-color: #c8fdd6;
}

.c-no { width: 33px; }
.c-name { width: 73px; }
.c-dia { width: 56px; }
.c-grade { width: 36px; }
.c-code { width: 33px; }
.c-shape { width: 201px; }
.c-calc { width: 166px; }
.c-desc { width: 169px; }

.rebar th,
.rebar td {
    border: 1px solid #b4b4a4;
    padding: 0 2px;
    font-weight: normal;
    white-space: nowrap;
    overflow: hidden;
}

.head th {
    height: 18px;
    line-height: 18px;
    background: linear-gradient(#faf9f4, #e4e1d2);
}

.rebar th.hot,
.props th.hot {
    background: linear-gradient(#fadc9c, #f4be68);
    color: #800020;
}

.rebar td {
    height: 32px;
    text-align: center;
}

.rebar td.left {
    text-align: left;
}

.mono {
    font-family: "Liberation Mono", monospace;
    font-size: 10px;
}

.rebar td.desc {
    line-height: 12px;
}

.rebar td.no {
    background: linear-gradient(#f4f2e8, #e0ddcc);
}

.rebar td.shape {
    position: relative;
    padding: 0;
}

.sel .shape {
    background-color: #b4e6d4;
}

.bar {
    position: absolute;
    left: 0;
    top: 0;
    right: 29px;
    height: 22px;
    box-sizing: content-box;
    border-bottom: 2px solid #000;
    text-align: center;
    padding-left: 24px;
    width: 148px;
}

.bar .red {
    color: #c01818;
    font-family: "Liberation Sans", sans-serif;
    font-size: 11px;
    line-height: 25px;
}

.hook {
    top: 8px;
    height: 13px;
    width: auto;
    padding-left: 40px;
    right: 41px;
    border-right: 2px solid #000;
}

.hook .red {
    line-height: 14px;
}

.end {
    position: absolute;
    left: 162px;
    top: 8px;
    font-family: "Liberation Sans", sans-serif;
    font-size: 11px;
}

.stirrup {
    position: absolute;
    left: 38px;
    right: 32px;
    top: 6px;
    height: 30px;
    padding-right: 8px;
    border: 2px solid #000;
    border-radius: 3px;
    text-align: center;
    font-family: "Liberation Sans", sans-serif;
    font-size: 11px;
}

/* floating windows */
.prop-win {
    position: absolute;
    left: 187px;
    top: 184px;
    width: 439px;
    height: 646px;
    box-sizing: border-box;
    border: 4px solid #7384d2;
    border-top-color: #8494e0;
    border-bottom-color: #6876c4;
    background-color: #7384d2;
    display: flex;
    flex-direction: column;
}

.win-title {
    height: 16px;
    flex: none;
    display: flex;
    align-items: center;
    justify-content: space-between;
    background: linear-gradient(#6f84e0, #6a7dd2);
    color: #dce4fa;
    font-weight: bold;
}

.win-close {
    width: 12px;
    height: 12px;
    padding: 0;
    margin-right: 1px;
    border: 1px solid #fff;
    background-color: #b06a90;
    color: #fff;
    display: block;
}

.win-close svg {
    display: block;
    width: 10px;
    height: 10px;
}

.win-body {
    flex: 1;
    background-color: #fff;
    padding: 1px 0 0 1px;
}

.props {
    border-collapse: collapse;
    table-layout: fixed;
    width: 428px;
}

.p-no { width: 20px; }
.p-name { width: 121px; }

.props th,
.props td {
    border: 1px solid #b8b8b8;
    padding: 0;
    font-weight: normal;
    height: 18px;
    white-space: nowrap;
    overflow: hidden;
}

.p-head th {
    height: 23px;
    border-color: #dedcd0;
    background: linear-gradient(#fbfaf6, #ecead0);
}

.props td.no {
    text-align: center;
    font-family: "Liberation Mono", monospace;
    font-size: 11px;
    background: linear-gradient(#f6f4ea, #e0ddcc);
}

.props .name {
    padding-left: 20px;
}

.props td.val {
    padding-left: 4px;
    color: #808080;
}

.bar-mark {
    color: #303030;
    font-style: normal;
    font-size: 10px;
}

.hrb {
    text-decoration: underline;
}

.on td.no {
    background: linear-gradient(#fbd898, #f6c070);
    color: #800000;
}

.on .name {
    background-color: #316ac5;
    color: #fff;
}

.link .name {
    color: #0000c0;
}

.group .name {
    color: #808080;
    padding-left: 3px;
}

.plus {
    display: inline-block;
    box-sizing: border-box;
    width: 12px;
    height: 12px;
    margin-right: 6px;
    vertical-align: -2px;
    border: 1px solid #b4b4a8;
    background:
        linear-gradient(#222, #222) center / 7px 1px no-repeat,
        linear-gradient(#222, #222) center / 1px 7px no-repeat,
        linear-gradient(#fff, #e6e4d8);
}

.rebar-panel {
    position: absolute;
    left: 333px;
    top: 88px;
    width: 176px;
    height: 174px;
    box-sizing: border-box;
    border: 4px solid #6f80d4;
    border-right-color: #5d6cc0;
    border-bottom-color: #4a58b0;
    background-color: #6f80d4;
    display: flex;
    flex-direction: column;
}

.panel-title {
    height: 18px;
    flex: none;
    color: #dce4fa;
    font-weight: bold;
    line-height: 18px;
    padding-left: 1px;
}

.panel-body {
    flex: 1;
    background-color: #fff;
    border: 1px solid #a8a8a8;
    padding: 1px 0 0 4px;
}

.panel-body li {
    height: 12px;
    line-height: 12px;
    display: flex;
    align-items: center;
    gap: 4px;
    white-space: nowrap;
}

.chk {
    width: 11px;
    height: 11px;
    flex: none;
}

/* annotation */
.note {
    position: absolute;
    left: 0;
    top: 0;
    pointer-events: none;
}

.note-line {
    fill: none;
    stroke: #b01c24;
}

.note-head {
    fill: #e01820;
}

.note-ring {
    fill: none;
    stroke: #c02028;
}
```

FILE: canvas.js
```js
// Draws the rebar mesh of the wall into the drawing, all in page coordinates
const SVG_NS = "http://www.w3.org/2000/svg";
const rebar = document.getElementById("rebar");
const RISE = -0.082;

function addLine(x1, y1, x2, y2, color, width) {
    const line = document.createElementNS(SVG_NS, "line");
    line.setAttribute("x1", x1);
    line.setAttribute("y1", y1);
    line.setAttribute("x2", x2);
    line.setAttribute("y2", y2);
    line.setAttribute("stroke", color);
    line.setAttribute("stroke-width", width);
    rebar.appendChild(line);
}

// Left edge of the wall
function leftX(y) {
    return 717 + ((y - 293) / 255) * 71;
}

// Teal band along the top of the wall
const band = document.createElementNS(SVG_NS, "polygon");
band.setAttribute("points", "703,242 715,236 1018,207 1018,267 717,293");
band.setAttribute("fill", "#0a4448");
rebar.appendChild(band);

// Vertical bars, two per bay; one of them carries on through the band
for (let i = 0; i < 36; i++) {
    const xTop = 722 + i * 15;
    const xBottom = 795 + i * 15;
    const yTop = 293 - 0.086 * (xTop - 717);
    addLine(xTop + 3, yTop, xBottom + 3, 553 - 0.085 * (xBottom - 795), "#c8c0b8", 1);
    addLine(xTop + 8, yTop, xBottom + 8, 553 - 0.085 * (xBottom - 790), "#c8c0b8", 1);

    const xHead = xTop - 13;
    const yHead = 241 - 0.095 * (xHead - 705);
    addLine(xHead, yHead, xTop, yTop, "#2c8488", 0.8);
    addLine(xHead, yHead, xHead + 9, yHead - 4, "#2c8488", 0.8);
}

// Horizontal bars in pairs, with the yellow hook on the left end
function addRow(x, y, color) {
    addLine(x + 6, y - 2, x + 330, y - 2 + 324 * RISE, color, 1.2);
    addLine(x + 16, y + 3, x + 330, y + 3 + 314 * RISE, color, 1.2);
    addLine(x, y, x + 10, y - 5, "#e6e660", 1);
}

// Two rows in the band, the rest on the open mesh
addRow(708, 252, "#3aa8a8");
addRow(713, 272, "#3aa8a8");
for (let n = 0; n < 13; n++) {
    const y = 302 + n * 20.4;
    addRow(leftX(y), y, "#5fe0e0");
}
```
